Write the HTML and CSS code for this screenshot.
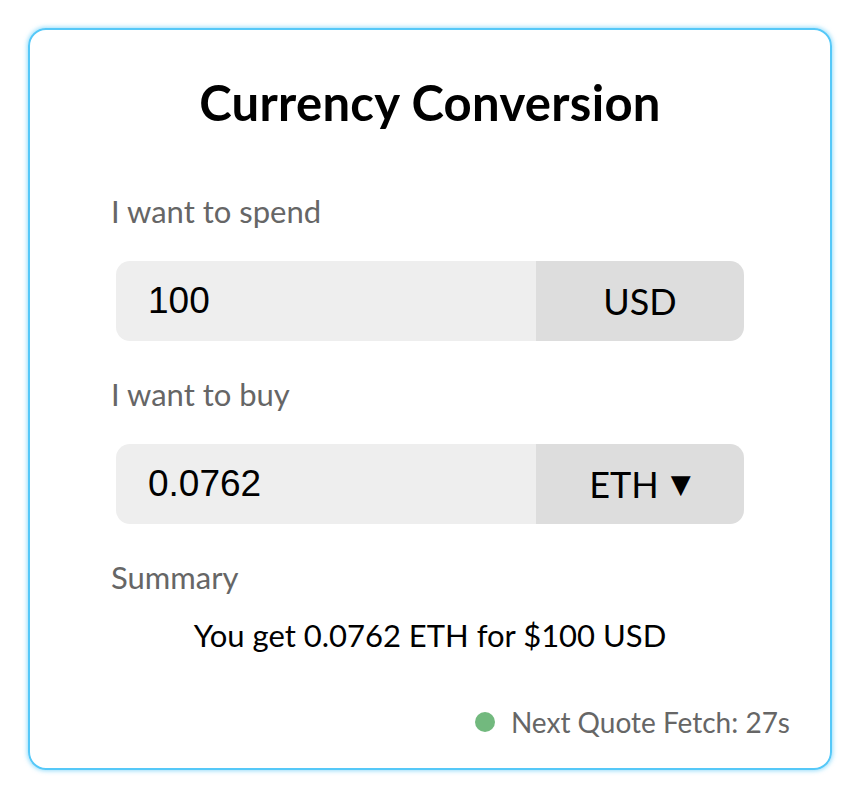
FILE: index.html
```html
<!DOCTYPE html>
<html lang="en">
<head>
<meta charset="utf-8">
<title>Currency Conversion</title>
<link rel="stylesheet" href="styles.css">
</head>
<body>
<div class="card">
  <h1 class="title">Currency Conversion</h1>
  <div class="form">
    <div class="label">I want to spend</div>
    <div class="row">
      <div class="amount">100</div>
      <div class="currency">USD</div>
    </div>
    <div class="label label-2">I want to buy</div>
    <div class="row">
      <div class="amount">0.0762</div>
      <div class="currency">ETH <span class="caret">▼</span></div>
    </div>
    <div class="label label-3">Summary</div>
    <div class="summary">You get 0.0762 ETH for $100 USD</div>
  </div>
  <div class="footer">
    <span class="dot"></span>
    <span class="next">Next Quote Fetch: 27s</span>
  </div>
</div>
</body>
</html>
```
FILE: styles.css
```css
* { box-sizing: border-box; }
html, body { margin: 0; padding: 0; background: #ffffff; }
body {
  padding: 28px;
  font-family: "Lato", "Noto Sans", sans-serif;
  color: #000;
}
.card {
  width: 804px;
  height: 742px;
  border: 2px solid #55c8f8;
  border-radius: 18px;
  box-shadow: 0 0 4px 1px rgba(85, 200, 248, 0.6);
  padding: 0 81px;
  display: flex;
  flex-direction: column;
}
.title {
  margin: 0;
  padding-top: 44px;
  font-size: 49px;
  line-height: 56px;
  font-weight: 700;
  text-align: center;
  letter-spacing: 0.3px;
}
.form {
  display: flex;
  flex-direction: column;
}
.label {
  margin-top: 63px;
  font-size: 31px;
  line-height: 36px;
  color: #666666;
}
.label-2 { margin-top: 35px; }
.label-3 { margin-top: 35px; }
.row {
  margin: 32px 5px 0;
  height: 80px;
  display: flex;
  border-radius: 14px;
  overflow: hidden;
}
.amount {
  flex: 1;
  background: #eeeeee;
  padding-left: 32px;
  display: flex;
  align-items: center;
  font-family: "Liberation Sans", Arial, sans-serif;
  font-size: 37px;
}
.currency {
  width: 208px;
  background: #dddddd;
  display: flex;
  align-items: center;
  justify-content: center;
  font-size: 36px;
}
.caret {
  font-family: "DejaVu Sans", sans-serif;
  font-size: 26px;
  margin-left: 12px;
}
.summary {
  margin-top: 22px;
  text-align: center;
  font-size: 31px;
  line-height: 36px;
}
.footer {
  margin-top: auto;
  margin-bottom: 28px;
  display: flex;
  align-items: center;
  justify-content: flex-end;
  margin-right: -41px;
}
.dot {
  width: 20px;
  height: 20px;
  border-radius: 50%;
  background: #72b97e;
  margin-right: 16px;
}
.next {
  font-size: 28px;
  line-height: 36px;
  color: #666666;
}
```
